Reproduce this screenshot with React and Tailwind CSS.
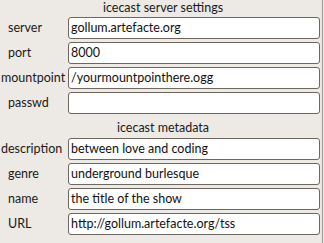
export default function App() {
  const font = { fontFamily: 'Lato, "DejaVu Sans", sans-serif' };
  const Row = ({ label, value, pl }) => (
    <div className="flex h-[22px] items-center">
      <div className={`w-[68px] shrink-0 text-[12.5px] text-[#1a1a1a] ${pl}`}>{label}</div>
      <div className="flex h-[22px] w-[252px] items-center rounded-[3px] border border-[#6e675f] bg-white pl-[2px] text-[12.5px] text-[#111]">
        {value}
      </div>
    </div>
  );
  return (
    <div className="h-[243px] w-[324px] bg-[#ede9e4]" style={font}>
      <div className="flex h-[243px] w-[323px] flex-col border-r border-[#a39d95]">
        <div className="flex h-[17px] items-center justify-center pl-[4px] text-[12.5px] text-[#1a1a1a]">icecast server settings</div>
        <div className="flex flex-col gap-[3px]">
          <Row label="server" value="gollum.artefacte.org" pl="pl-[8px]" />
          <Row label="port" value="8000" pl="pl-[8px]" />
          <Row label="mountpoint" value="/yourmountpointhere.ogg" pl="pl-[1px]" />
          <Row label="passwd" value="" pl="pl-[8px]" />
        </div>
        <div className="flex h-[24px] items-center justify-center pl-[4px] pt-[5px] text-[12.5px] text-[#1a1a1a]">icecast metadata</div>
        <div className="flex flex-col gap-[3px]">
          <Row label="description" value="between love and coding" pl="pl-[1px]" />
          <Row label="genre" value="underground burlesque" pl="pl-[8px]" />
          <Row label="name" value="the title of the show" pl="pl-[8px]" />
          <Row label="URL" value="http://gollum.artefacte.org/tss" pl="pl-[8px]" />
        </div>
      </div>
    </div>
  );
}
